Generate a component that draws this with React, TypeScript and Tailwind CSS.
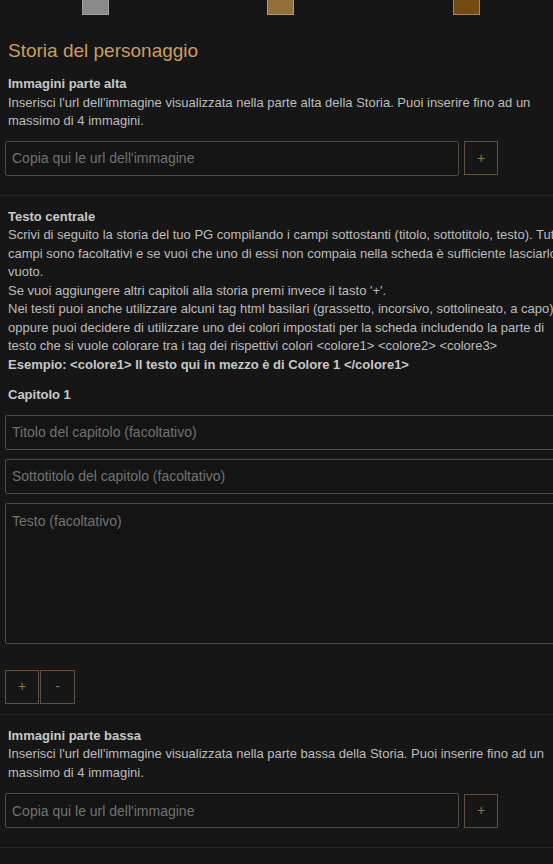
import React from 'react';

const font = { fontFamily: '"Liberation Sans", Arial, sans-serif' };

function UrlRow() {
  return (
    <div className="flex items-center gap-[5px]">
      <input
        className="w-[454px] h-[35px] bg-[#141414] border border-[#564a3b] rounded-[2px] px-[6px] text-[14px] text-[#ccc] placeholder:text-[#727272] outline-none"
        placeholder="Copia qui le url dell'immagine"
      />
      <button className="w-[34px] h-[34px] border border-[#5f5141] text-[#8c7850] text-[14px] flex items-center justify-center">
        +
      </button>
    </div>
  );
}

function Separator() {
  return <div className="h-px bg-[#262626] -mx-[5px]" />;
}

export default function App() {
  return (
    <div className="w-[553px] h-[864px] overflow-hidden bg-[#161616]" style={font}>
      <div className="w-[582px] px-[5px]">
        {/* colour swatches */}
        <div className="relative h-[16px]">
          <div className="absolute left-[77px] top-0 w-[27px] h-[15px] bg-[#8a8a8a] border border-[#a0a0a0] border-t-0" />
          <div className="absolute left-[262px] top-0 w-[27px] h-[15px] bg-[#93703a] border border-[#b09a78] border-t-0" />
          <div className="absolute left-[448px] top-0 w-[27px] h-[15px] bg-[#734a10] border border-[#a08660] border-t-0" />
        </div>

        <h2 className="px-[3px] mt-[23px] text-[19px] leading-[24px] text-[#c89f62]">Storia del personaggio</h2>

        <div className="px-[3px] mt-[12px] text-[13px] leading-[18.5px] text-[#bdbdbd]">
          <div className="font-bold text-[#c8c8c8]">Immagini parte alta</div>
          <div>Inserisci l'url dell'immagine visualizzata nella parte alta della Storia. Puoi inserire fino ad un massimo di 4 immagini.</div>
        </div>
        <div className="mt-[10px]">
          <UrlRow />
        </div>
        <div className="mt-[19px]">
          <Separator />
        </div>

        <div className="px-[3px] mt-[12px] text-[13px] leading-[18.5px] text-[#bdbdbd]">
          <div className="font-bold text-[#c8c8c8]">Testo centrale</div>
          <div>
            Scrivi di seguito la storia del tuo PG compilando i campi sottostanti (titolo, sottotitolo, testo). Tutti i campi sono facoltativi e se vuoi che uno di essi non compaia nella scheda è sufficiente lasciarlo vuoto.
          </div>
          <div>Se vuoi aggiungere altri capitoli alla storia premi invece il tasto '+'.</div>
          <div>
            Nei testi puoi anche utilizzare alcuni tag html basilari (grassetto, incorsivo, sottolineato, a capo), oppure puoi decidere di utilizzare uno dei colori impostati per la scheda includendo la parte di testo che si vuole colorare tra i tag dei rispettivi colori &lt;colore1&gt; &lt;colore2&gt; &lt;colore3&gt;
          </div>
          <div className="font-bold text-[#c8c8c8]">Esempio: &lt;colore1&gt; Il testo qui in mezzo è di Colore 1 &lt;/colore1&gt;</div>
          <div className="font-bold text-[#c8c8c8] mt-[12px]">Capitolo 1</div>
        </div>

        <div className="mt-[10px] flex flex-col gap-[9px]">
          <input
            className="w-full h-[35px] bg-[#141414] border border-[#564a3b] rounded-[2px] px-[6px] text-[14px] text-[#ccc] placeholder:text-[#727272] outline-none"
            placeholder="Titolo del capitolo (facoltativo)"
          />
          <input
            className="w-full h-[35px] bg-[#141414] border border-[#564a3b] rounded-[2px] px-[6px] text-[14px] text-[#ccc] placeholder:text-[#727272] outline-none"
            placeholder="Sottotitolo del capitolo (facoltativo)"
          />
          <textarea
            className="w-full h-[141px] bg-[#141414] border border-[#564a3b] rounded-[2px] px-[6px] py-[8px] text-[14px] leading-[18px] text-[#ccc] placeholder:text-[#727272] outline-none resize-none block"
            placeholder="Testo (facoltativo)"
          />
        </div>

        <div className="mt-[26px] flex gap-[1px]">
          <button className="w-[34px] h-[34px] border border-[#5f5141] text-[#8c7850] text-[14px] flex items-center justify-center">+</button>
          <button className="w-[35px] h-[34px] border border-[#5f5141] text-[#8c7850] text-[14px] flex items-center justify-center">-</button>
        </div>
        <div className="mt-[10px]">
          <Separator />
        </div>

        <div className="px-[3px] mt-[12px] text-[13px] leading-[18.5px] text-[#bdbdbd]">
          <div className="font-bold text-[#c8c8c8]">Immagini parte bassa</div>
          <div>Inserisci l'url dell'immagine visualizzata nella parte bassa della Storia. Puoi inserire fino ad un massimo di 4 immagini.</div>
        </div>
        <div className="mt-[11px]">
          <UrlRow />
        </div>
        <div className="mt-[19px]">
          <Separator />
        </div>
      </div>
    </div>
  );
}
